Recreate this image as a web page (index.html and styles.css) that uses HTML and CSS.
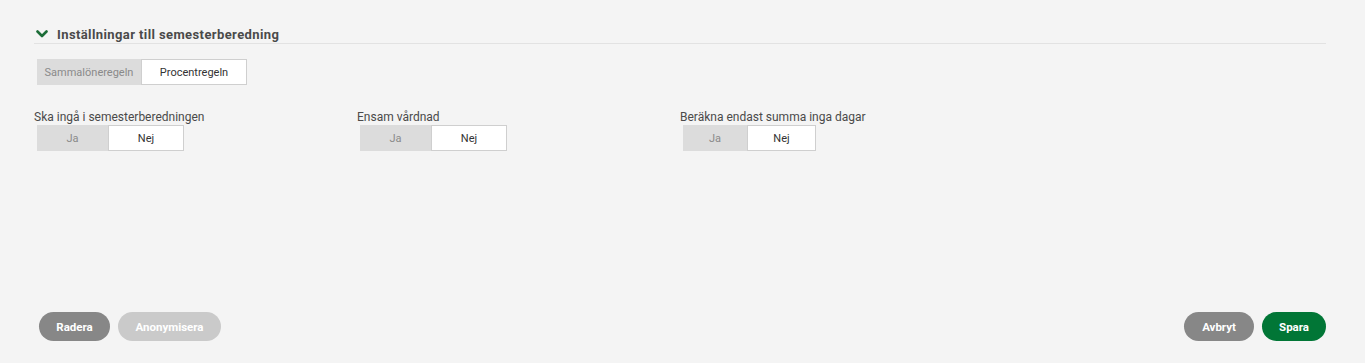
FILE: index.html
```html
<!DOCTYPE html>
<html lang="sv">
<head>
<meta charset="utf-8">
<title>Inställningar till semesterberedning</title>
<link rel="stylesheet" href="styles.css">
</head>
<body>
<div class="page">
  <section class="section">
    <div class="section-head">
      <svg class="chev" width="12" height="8" viewBox="0 0 12 8"><path d="M1.5 1.5 L6 6 L10.5 1.5" fill="none" stroke="#1c6d38" stroke-width="2.6" stroke-linecap="round" stroke-linejoin="round"/></svg>
      <span class="section-title">Inställningar till semesterberedning</span>
    </div>
    <div class="seg rule">
      <span class="seg-item off w104">Sammalöneregeln</span>
      <span class="seg-item on w106">Procentregeln</span>
    </div>
    <div class="fields">
      <div class="field">
        <div class="label">Ska ingå i semesterberedningen</div>
        <div class="seg toggle">
          <span class="seg-item off w71">Ja</span>
          <span class="seg-item on w76">Nej</span>
        </div>
      </div>
      <div class="field">
        <div class="label">Ensam vårdnad</div>
        <div class="seg toggle">
          <span class="seg-item off w71">Ja</span>
          <span class="seg-item on w76">Nej</span>
        </div>
      </div>
      <div class="field">
        <div class="label">Beräkna endast summa inga dagar</div>
        <div class="seg toggle">
          <span class="seg-item off w64">Ja</span>
          <span class="seg-item on w69">Nej</span>
        </div>
      </div>
    </div>
  </section>
  <footer class="footer">
    <div class="btns">
      <button class="btn grey w71b">Radera</button>
      <button class="btn light w103b">Anonymisera</button>
    </div>
    <div class="btns">
      <button class="btn grey w70b">Avbryt</button>
      <button class="btn green w64b">Spara</button>
    </div>
  </footer>
</div>
</body>
</html>
```
FILE: styles.css
```css
html, body {
  margin: 0;
  padding: 0;
  background: #f4f4f4;
}
body {
  font-family: Roboto, "Liberation Sans", Arial, sans-serif;
  color: #444;
}
.page {
  height: 363px;
  box-sizing: border-box;
  padding: 25px 39px 22px 34px;
  display: flex;
  flex-direction: column;
}
.section-head {
  display: flex;
  align-items: center;
  height: 18px;
  border-bottom: 1px solid #e2e2e2;
}
.chev {
  margin-left: 2px;
  margin-right: 9px;
}
.section-title {
  font-weight: 700;
  font-size: 13px;
  color: #4a4a4a;
  letter-spacing: 0.4px;
}
.seg {
  display: flex;
  margin-left: 3px;
}
.rule {
  margin-top: 15px;
  height: 26px;
}
.seg-item {
  display: flex;
  align-items: center;
  justify-content: center;
  box-sizing: border-box;
  font-size: 11px;
}
.seg-item.off {
  background: #dcdcdc;
  color: #8a8a8a;
}
.seg-item.on {
  background: #fff;
  border: 1px solid #cfcfcf;
  color: #333;
}
.w104 { width: 104px; }
.w106 { width: 106px; }
.w71 { width: 71px; }
.w76 { width: 76px; }
.w64 { width: 64px; }
.w69 { width: 69px; }
.fields {
  display: flex;
  margin-top: 25px;
}
.field {
  width: 323px;
}
.label {
  font-size: 12px;
  line-height: 14px;
  color: #4a4a4a;
  margin-bottom: 1px;
}
.toggle {
  height: 26px;
}
.footer {
  margin-top: auto;
  display: flex;
  justify-content: space-between;
  padding-left: 5px;
}
.btns {
  display: flex;
  gap: 8px;
}
.btn {
  border: none;
  height: 29px;
  border-radius: 15px;
  padding: 0;
  font-family: Roboto, "Liberation Sans", Arial, sans-serif;
  font-weight: 700;
  font-size: 11.5px;
  color: #fff;
}
.w71b { width: 71px; }
.w103b { width: 103px; }
.w70b { width: 70px; }
.w64b { width: 64px; }
.btn.grey { background: #878787; }
.btn.light { background: #cacaca; }
.btn.green { background: #017636; }
```
